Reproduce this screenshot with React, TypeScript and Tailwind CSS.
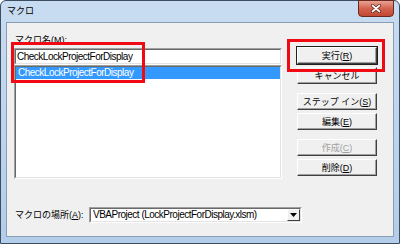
const font = "font-['Liberation_Sans','Noto_Sans_CJK_JP',sans-serif]";

function Btn({
  label,
  u,
  disabled,
  primary,
}: {
  label: string;
  u?: string;
  disabled?: boolean;
  primary?: boolean;
}) {
  return (
    <div
      className={
        "w-[80px] h-[17px] flex items-center justify-center whitespace-nowrap text-[9px] leading-[12px] bg-[#f0f0f0] border border-t-white border-l-white border-b-[#404040] border-r-[#404040] shadow-[inset_-1px_-1px_0_#a0a0a0] " +
        (primary ? "outline outline-1 outline-[#202020] " : "") +
        (disabled ? "text-[#a0a0a0]" : "text-black")
      }
    >
      {label}
      {u && (
        <>
          (<span className="underline">{u}</span>)
        </>
      )}
    </div>
  );
}

export default function App() {
  return (
    <div className={"relative w-[400px] h-[244px] bg-white " + font}>
      <div className="w-[400px] h-[244px] flex flex-col rounded-t-[6px] border border-[#3c4d60] bg-gradient-to-b from-[#c8dcf1] to-[#b3cdea]">
        {/* title bar */}
        <div className="h-[21px] flex justify-between">
          <div className="pl-[6px] pt-[4px] text-[9px] leading-[12px] text-black">マクロ</div>
          <div className="-mt-px mr-[5px] w-[36px] h-[17px] rounded-b-[4px] border border-[#6b2a20] bg-gradient-to-b from-[#e7a393] via-[#d3634f] to-[#c24832] flex items-center justify-center">
            <svg width="10" height="9" viewBox="0 0 10 9">
              <path d="M1.5 1.5 L8.5 7.5 M8.5 1.5 L1.5 7.5" stroke="#5a2018" strokeWidth="3.2" strokeLinecap="round" />
              <path d="M1.5 1.5 L8.5 7.5 M8.5 1.5 L1.5 7.5" stroke="#ffffff" strokeWidth="1.7" strokeLinecap="round" />
            </svg>
          </div>
        </div>

        {/* client area */}
        <div className="mx-[5px] mb-[6px] h-[215px] border border-[#8a9db5] bg-[#f0f0f0] pl-[7px] pt-[11px] flex flex-col text-black">
          <div className="flex">
            <div className="w-[268px] flex flex-col">
              <div className="h-[14px] pl-px text-[9px] leading-[12px] whitespace-nowrap">
                マクロ名(<span className="underline">M</span>):
              </div>
              <div className="h-[17px] border border-t-[#a0a0a0] border-l-[#a0a0a0] border-b-white border-r-white">
                <div className="h-full bg-white border border-t-[#696969] border-l-[#696969] border-b-[#e3e3e3] border-r-[#e3e3e3] pl-[1px] text-[10px] leading-[13px] tracking-[-0.5px]">
                  CheckLockProjectForDisplay
                </div>
              </div>
              <div className="h-[114px] border border-t-[#a0a0a0] border-l-[#a0a0a0] border-b-white border-r-white">
                <div className="h-full bg-white border border-t-[#696969] border-l-[#696969] border-b-[#e3e3e3] border-r-[#e3e3e3]">
                  <div className="h-[12px] bg-[#3399ff] text-white pl-[2px] text-[10px] leading-[12px] tracking-[-0.5px]">
                    CheckLockProjectForDisplay
                  </div>
                </div>
              </div>
            </div>

            <div className="ml-[15px] pt-[13px] flex flex-col">
              <Btn label="実行" u="R" primary />
              <div className="mt-[3px]">
                <Btn label="キャンセル" />
              </div>
              <div className="mt-[9px]">
                <Btn label="ステップ イン" u="S" />
              </div>
              <div className="mt-[3px]">
                <Btn label="編集" u="E" />
              </div>
              <div className="mt-[9px]">
                <Btn label="作成" u="C" disabled />
              </div>
              <div className="mt-[3px]">
                <Btn label="削除" u="D" />
              </div>
            </div>
          </div>

          <div className="mt-[28px] flex items-center">
            <div className="w-[75px] pl-px text-[9px] leading-[12px] whitespace-nowrap">
              マクロの場所(<span className="underline">A</span>):
            </div>
            <div className="w-[213px] h-[16px] border border-t-[#a0a0a0] border-l-[#a0a0a0] border-b-white border-r-white">
              <div className="h-full flex bg-white border border-t-[#696969] border-l-[#696969] border-b-[#e3e3e3] border-r-[#e3e3e3]">
                <div className="flex-1 pl-[2px] text-[10px] leading-[12px] tracking-[-0.5px] whitespace-nowrap">
                  VBAProject (LockProjectForDisplay.xlsm)
                </div>
                <div className="w-[13px] h-full bg-[#f0f0f0] border border-t-white border-l-white border-b-[#404040] border-r-[#404040] flex items-center justify-center">
                  <svg width="7" height="4" viewBox="0 0 7 4">
                    <path d="M0 0 H7 L3.5 4 Z" fill="#000" />
                  </svg>
                </div>
              </div>
            </div>
          </div>
        </div>
      </div>

      {/* red annotation boxes */}
      <div className="absolute left-[11px] top-[42px] w-[134px] h-[41px] border-[3px] border-[#f00a14]" />
      <div className="absolute left-[287px] top-[39px] w-[98px] h-[33px] border-[3px] border-[#f00a14]" />
    </div>
  );
}
